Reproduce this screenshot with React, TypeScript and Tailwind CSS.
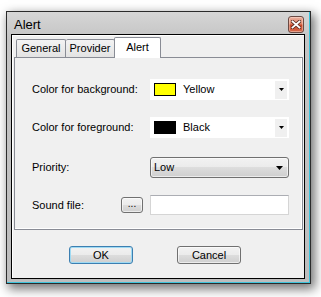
import React from "react";

function Tri({ w, h }: { w: number; h: number }) {
  return (
    <svg width={w} height={h} viewBox={`0 0 ${w} ${h}`}>
      <polygon points={`0,0 ${w},0 ${w / 2},${h}`} fill="#000" />
    </svg>
  );
}

function CloseButton() {
  return (
    <div className="mt-[4px] w-[16px] h-[17px] rounded-[3px] border border-[#6a4a44] bg-[linear-gradient(#eab1a1_0%,#dd8468_45%,#c8472a_55%,#d4694b_100%)] shadow-[inset_0_0_0_1px_rgba(255,230,220,0.45)] flex items-center justify-center">
      <svg width="10" height="9" viewBox="0 0 10 9">
        <path d="M1.5 1.5 L8.5 7.5 M8.5 1.5 L1.5 7.5" stroke="#5a2a20" strokeWidth="3.4" strokeLinecap="square" />
        <path d="M1.5 1.5 L8.5 7.5 M8.5 1.5 L1.5 7.5" stroke="#fff" strokeWidth="1.8" strokeLinecap="square" />
      </svg>
    </div>
  );
}

function ColorCombo({ color, name }: { color: string; name: string }) {
  return (
    <div className="w-[139px] h-[21px] bg-white flex items-center">
      <div className="ml-[4px] w-[22px] h-[13px] border border-black" style={{ backgroundColor: color }} />
      <span className="ml-[7px] text-[11px] leading-[13px]">{name}</span>
      <div className="ml-auto mr-[2px] w-[12px] h-[18px] bg-[#f0f0f0] flex items-center justify-center">
        <Tri w={5} h={3} />
      </div>
    </div>
  );
}

export default function App() {
  return (
    <div className="w-[321px] h-[297px] bg-white pl-[6px] pt-[11px] font-['Liberation_Sans',Arial,sans-serif] text-[11px] text-black">
      <div className="w-[305px] h-[273px] border border-[#2b2b2b] bg-[linear-gradient(#d6d6d6_0%,#c4c4c4_10%,#bdbdbd_100%)] shadow-[inset_-1px_-1px_0_#3ec4dc,3px_4px_10px_1px_rgba(0,0,0,0.55)] flex flex-col">
        <div className="h-[22px] flex items-start justify-between pl-[7px] pr-[6px]">
          <span className="mt-[5px] text-[13px] leading-[15px]">Alert</span>
          <CloseButton />
        </div>
        <div className="ml-[4px] w-[294px] h-[245px] border border-black bg-[#f0f0f0] shadow-[inset_1px_1px_0_#fff] flex flex-col pl-[2px] pt-[2px]">
          <div className="h-[21px] flex items-end">
            <div className="ml-[2px] mb-[1px] w-[50px] h-[18px] border border-b-0 border-[#898c95] rounded-t-[2px] bg-[linear-gradient(#f3f3f3,#e3e3e3)] flex items-center justify-center leading-[13px]">
              General
            </div>
            <div className="mb-[1px] w-[49px] h-[18px] border border-l-0 border-b-0 border-[#898c95] rounded-t-[2px] bg-[linear-gradient(#f3f3f3,#e3e3e3)] flex items-center justify-center leading-[13px]">
              Provider
            </div>
            <div className="relative z-10 -ml-px w-[47px] h-[21px] border border-b-0 border-[#898c95] rounded-t-[2px] bg-white flex items-start justify-center pt-[3px] leading-[13px]">
              Alert
            </div>
          </div>
          <div className="-mt-px w-[289px] h-[173px] border border-[#898c95] bg-[#f0f0f0] shadow-[inset_-1px_-1px_0_#fff] flex flex-col pl-[17px] pt-[21px]">
            <div className="h-[21px] flex items-center">
              <span className="w-[118px]">Color for background:</span>
              <ColorCombo color="#ffff00" name="Yellow" />
            </div>
            <div className="mt-[17px] h-[21px] flex items-center">
              <span className="w-[118px]">Color for foreground:</span>
              <ColorCombo color="#000000" name="Black" />
            </div>
            <div className="mt-[19px] h-[21px] flex items-center">
              <span className="w-[118px]">Priority:</span>
              <div className="w-[139px] h-[21px] rounded-[3px] border border-[#707070] bg-[linear-gradient(#f2f2f2_0%,#ebebeb_50%,#dddddd_50%,#cfcfcf_100%)] shadow-[inset_0_0_0_1px_rgba(255,255,255,0.6)] flex items-center pl-[3px] pr-[5px]">
                <span className="leading-[13px]">Low</span>
                <div className="ml-auto flex items-center">
                  <Tri w={7} h={4} />
                </div>
              </div>
            </div>
            <div className="mt-[17px] h-[20px] flex items-center">
              <span className="w-[89px]">Sound file:</span>
              <div className="w-[22px] h-[16px] rounded-[3px] border border-[#707070] bg-[linear-gradient(#f2f2f2_0%,#ebebeb_50%,#dddddd_50%,#cfcfcf_100%)] shadow-[inset_0_0_0_1px_rgba(255,255,255,0.6)] flex items-center justify-center text-[10px] leading-[10px] pb-[2px]">
                ...
              </div>
              <div className="ml-[7px] w-[139px] h-[20px] bg-white border border-[#d5d5d5] border-t-[#abadb3]" />
            </div>
          </div>
          <div className="mt-[16px] flex">
            <div className="ml-[55px] w-[64px] h-[18px] rounded-[3px] border border-[#3c7fb1] bg-[linear-gradient(#f2f2f2_0%,#ebebeb_50%,#dddddd_50%,#cfcfcf_100%)] shadow-[inset_0_0_0_1px_#9fdaf3] flex items-center justify-center leading-[13px]">
              OK
            </div>
            <div className="ml-[44px] w-[64px] h-[18px] rounded-[3px] border border-[#707070] bg-[linear-gradient(#f2f2f2_0%,#ebebeb_50%,#dddddd_50%,#cfcfcf_100%)] shadow-[inset_0_0_0_1px_rgba(255,255,255,0.6)] flex items-center justify-center leading-[13px]">
              Cancel
            </div>
          </div>
        </div>
      </div>
    </div>
  );
}
